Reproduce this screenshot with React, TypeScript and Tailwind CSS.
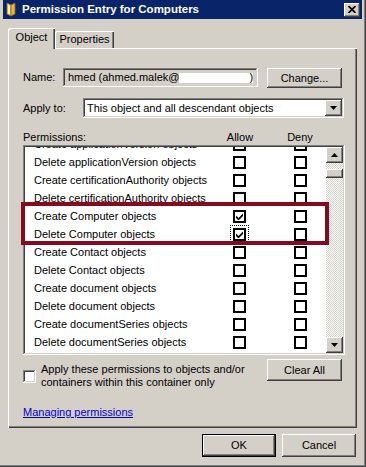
import React from 'react';

const raised =
  'bg-[#d4d0c8] shadow-[inset_-1px_-1px_#404040,inset_1px_1px_#fff,inset_-2px_-2px_#808080,inset_2px_2px_#d4d0c8]';
const sunken =
  'shadow-[inset_-1px_-1px_#fff,inset_1px_1px_#808080,inset_-2px_-2px_#d4d0c8,inset_2px_2px_#404040]';

const perms = [
  'Create applicationVersion objects',
  'Delete applicationVersion objects',
  'Create certificationAuthority objects',
  'Delete certificationAuthority objects',
  'Create Computer objects',
  'Delete Computer objects',
  'Create Contact objects',
  'Delete Contact objects',
  'Create document objects',
  'Delete document objects',
  'Create documentSeries objects',
  'Delete documentSeries objects',
  'Create domainPolicy objects',
];

function Check() {
  return (
    <svg width="7" height="7" viewBox="0 0 7 7">
      <polygon points="0,2.5 2.5,5 7,0.5 7,3 2.5,7.5 0,5" fill="#000" />
    </svg>
  );
}

function Box({ checked, focus }: { checked?: boolean; focus?: boolean }) {
  return (
    <div
      className={
        'w-[13px] h-[13px] border-2 border-black bg-white flex items-center justify-center shrink-0' +
        (focus ? ' outline outline-dotted outline-black outline-offset-2' : '')
      }
    >
      {checked && <Check />}
    </div>
  );
}

function Triangle({ up }: { up?: boolean }) {
  return (
    <svg width="7" height="4" viewBox="0 0 7 4">
      <polygon points={up ? '3.5,0 7,4 0,4' : '0,0 7,0 3.5,4'} fill="#000" />
    </svg>
  );
}

export default function App() {
  return (
    <div
      className="w-[366px] h-[467px] bg-[#d4d0c8] flex flex-col pl-[3px] pr-[4px] text-[11px] text-black shadow-[inset_-1px_-1px_#404040,inset_-2px_-2px_#808080]"
      style={{ fontFamily: '"Liberation Sans", Arial, sans-serif' }}
    >
      {/* title bar */}
      <div className="h-[19px] bg-[#0a246a] flex items-center pl-[3px] pr-[2px]">
        <svg width="10" height="15" viewBox="0 0 10 15" className="shrink-0">
          <path d="M1 1 L5 3 L5 14 L1 12 Z" fill="#f7d774" stroke="#8a6a1a" strokeWidth="0.8" />
          <path d="M5 3 L9 1 L9 12 L5 14 Z" fill="#e9b53c" stroke="#8a6a1a" strokeWidth="0.8" />
          <path d="M2 3 L4 4 L4 12 L2 11 Z" fill="#fff3b8" />
        </svg>
        <span className="ml-[6px] text-white font-bold text-[11.5px] leading-none">
          Permission Entry for Computers
        </span>
        <div className={`ml-auto w-[16px] h-[14px] flex items-center justify-center ${raised}`}>
          <svg width="8" height="7" viewBox="0 0 8 7">
            <path d="M0.5 0 L7.5 7 M7.5 0 L0.5 7" stroke="#000" strokeWidth="1.7" />
          </svg>
        </div>
      </div>

      <div className="flex flex-col px-[5px]">
        {/* tabs */}
        <div className="flex items-end h-[20px] mt-[9px]">
          <div className="relative z-10 -mb-[1px] h-[21px] w-[47px] bg-[#d4d0c8] rounded-tl-[2px] flex items-center justify-center pb-[3px] shadow-[inset_1px_1px_#fff,inset_-1px_0_#404040,inset_-2px_0_#808080]">
            Object
          </div>
          <div className="h-[17px] w-[59px] flex items-center justify-center rounded-tl-[2px] shadow-[inset_1px_1px_#fff,inset_-1px_0_#404040,inset_-2px_0_#808080]">
            Properties
          </div>
        </div>

        {/* tab panel */}
        <div className="w-[349px] h-[380px] pt-[20px] pl-[15px] flex flex-col shadow-[inset_1px_1px_#fff,inset_-1px_-1px_#404040,inset_-2px_-2px_#808080]">
          <div className="flex items-start">
            <span className="w-[40px] leading-[19px]">Name:</span>
            <div className={`w-[195px] h-[19px] flex items-center pl-[5px] whitespace-nowrap overflow-hidden ${sunken}`}>
              hmed (ahmed.malek@
              <span className="inline-block w-[74px] h-[10px] bg-white" />
              <span className="-ml-[4px]">)</span>
            </div>
            <div className={`ml-[9px] w-[75px] h-[20px] flex items-center justify-center ${raised}`}>Change...</div>
          </div>

          <div className="flex items-center mt-[10px]">
            <span className="w-[60px]">Apply to:</span>
            <div className={`w-[261px] h-[20px] bg-white flex items-center pl-[4px] pr-[2px] ${sunken}`}>
              <span className="flex-1">This object and all descendant objects</span>
              <div className={`w-[17px] h-[16px] flex items-center justify-center ${raised}`}>
                <Triangle />
              </div>
            </div>
          </div>

          <div className="flex h-[13px] leading-[13px] mt-[13px]">
            <span className="w-[197px]">Permissions:</span>
            <span className="w-[40px] text-center">Allow</span>
            <span className="w-[40px] ml-[20px] text-center">Deny</span>
          </div>

          {/* permission list */}
          <div className="relative mt-[1px] w-[322px] h-[210px]">
            <div className={`w-full h-full bg-white flex p-[2px] ${sunken}`}>
              <div className="flex-1 overflow-hidden">
                <div className="-mt-[12px]">
                  {perms.map((p, i) => (
                    <div key={p} className="h-[18px] flex items-center pl-[9px] whitespace-nowrap">
                      <span className="w-[199px]">{p}</span>
                      <Box checked={i === 4 || i === 5} focus={i === 5} />
                      <div className="ml-[48px]">
                        <Box />
                      </div>
                    </div>
                  ))}
                </div>
              </div>
              <div className="w-[17px] flex flex-col bg-[image:repeating-conic-gradient(#d4d0c8_0%_25%,#fff_0%_50%)] bg-[length:2px_2px]">
                <div className={`h-[16px] flex items-center justify-center ${raised}`}>
                  <Triangle up />
                </div>
                <div className={`h-[9px] mt-[6px] ${raised}`} />
                <div className={`h-[16px] mt-auto flex items-center justify-center ${raised}`}>
                  <Triangle />
                </div>
              </div>
            </div>
            <div className="absolute left-[-2px] top-[57px] w-[308px] h-[43px] border-4 border-[#880a1f]" />
          </div>

          <div className="flex items-start mt-[4px]">
            <div className="w-[244px] flex items-center mt-[4px]">
              <div className={`w-[13px] h-[13px] bg-white shrink-0 ${sunken}`} />
              <div className="ml-[5px] leading-[13px]">
                Apply these permissions to objects and/or
                <br />
                containers within this container only
              </div>
            </div>
            <div className={`w-[75px] h-[22px] flex items-center justify-center ${raised}`}>Clear All</div>
          </div>

          <a className="mt-[17px] leading-[13px] text-[#0000cc] underline self-start">Managing permissions</a>
        </div>

        {/* dialog buttons */}
        <div className="flex justify-end gap-[6px] mt-[6px] pr-[1px]">
          <div className="w-[74px] h-[23px] flex items-center justify-center bg-[#d4d0c8] shadow-[inset_-1px_-1px_#000,inset_1px_1px_#000,inset_-2px_-2px_#404040,inset_2px_2px_#fff,inset_-3px_-3px_#808080]">
            OK
          </div>
          <div className={`w-[74px] h-[23px] flex items-center justify-center ${raised}`}>Cancel</div>
        </div>
      </div>
    </div>
  );
}
